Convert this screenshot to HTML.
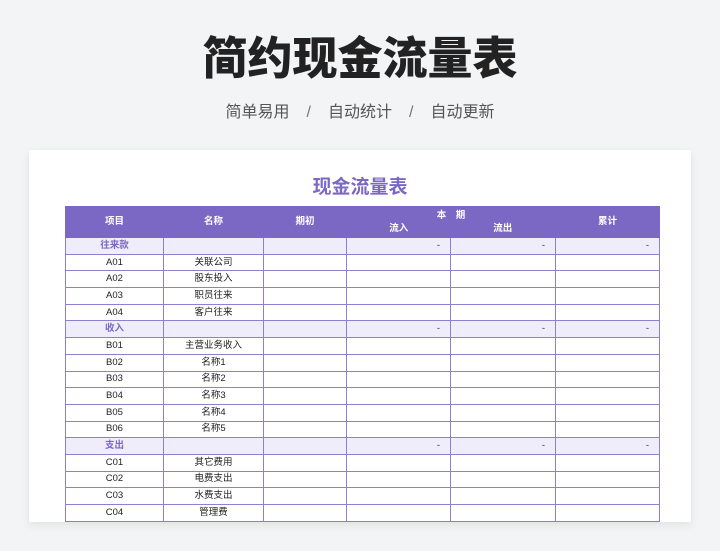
<!DOCTYPE html>
<html><head><meta charset="utf-8"><style>
*{margin:0;padding:0;box-sizing:border-box}
body{width:720px;height:551px;background:#f3f4f6;font-family:"Liberation Sans","Noto Sans CJK SC",sans-serif;position:relative;overflow:hidden}
.t{position:absolute;left:0;width:720px;text-align:center;top:30px;font-size:45px;font-weight:900;color:#222;line-height:58px;letter-spacing:0px}
.s{position:absolute;left:0;width:720px;text-align:center;top:102px;font-size:16px;color:#555;line-height:22px;word-spacing:0}
.s span{margin:0 17px;color:#777}
.card{position:absolute;left:29px;top:150px;width:662px;height:372px;background:#fff;box-shadow:0 3px 8px rgba(0,0,0,.08);overflow:hidden}
.ct{position:absolute;left:0;width:662px;top:22px;text-align:center;font-size:19px;font-weight:bold;color:#7b68c4}
table{position:absolute;left:36px;top:56px;border-collapse:collapse;table-layout:fixed;width:594px}
td{border:1px solid #8e80d0;height:16.7px;font-size:9.5px;text-align:center;color:#222;padding:0;line-height:14px}
tr.h td{background:#7b68c4;color:#fff;font-weight:bold;height:31px;border-color:#7b68c4}
tr.g td{background:#f0edfa;color:#7b68c4;font-weight:bold}
td.d{text-align:right;padding-right:10px;color:#888;font-weight:normal}
</style></head><body>
<div class="t">简约现金流量表</div>
<div class="s">简单易用<span>/</span>自动统计<span>/</span>自动更新</div>
<div class="card">
<div class="ct">现金流量表</div>
<table>
<colgroup><col style="width:98px"><col style="width:100px"><col style="width:83px"><col style="width:104px"><col style="width:105px"><col style="width:104px"></colgroup>
<tr class="h"><td>项目</td><td>名称</td><td>期初</td><td colspan="2" style="position:relative"><div style="position:absolute;left:0;right:0;top:2px">本　期</div><div style="display:flex;padding-top:14px"><span style="width:104px">流入</span><span style="width:105px">流出</span></div></td><td>累计</td></tr>
<tr class="g"><td>往来款</td><td></td><td></td><td class="d">-</td><td class="d">-</td><td class="d">-</td></tr>
<tr><td>A01</td><td>关联公司</td><td></td><td></td><td></td><td></td></tr>
<tr><td>A02</td><td>股东投入</td><td></td><td></td><td></td><td></td></tr>
<tr><td>A03</td><td>职员往来</td><td></td><td></td><td></td><td></td></tr>
<tr><td>A04</td><td>客户往来</td><td></td><td></td><td></td><td></td></tr>
<tr class="g"><td>收入</td><td></td><td></td><td class="d">-</td><td class="d">-</td><td class="d">-</td></tr>
<tr><td>B01</td><td>主营业务收入</td><td></td><td></td><td></td><td></td></tr>
<tr><td>B02</td><td>名称1</td><td></td><td></td><td></td><td></td></tr>
<tr><td>B03</td><td>名称2</td><td></td><td></td><td></td><td></td></tr>
<tr><td>B04</td><td>名称3</td><td></td><td></td><td></td><td></td></tr>
<tr><td>B05</td><td>名称4</td><td></td><td></td><td></td><td></td></tr>
<tr><td>B06</td><td>名称5</td><td></td><td></td><td></td><td></td></tr>
<tr class="g"><td>支出</td><td></td><td></td><td class="d">-</td><td class="d">-</td><td class="d">-</td></tr>
<tr><td>C01</td><td>其它费用</td><td></td><td></td><td></td><td></td></tr>
<tr><td>C02</td><td>电费支出</td><td></td><td></td><td></td><td></td></tr>
<tr><td>C03</td><td>水费支出</td><td></td><td></td><td></td><td></td></tr>
<tr><td>C04</td><td>管理费</td><td></td><td></td><td></td><td></td></tr>
<tr><td>C05</td><td>其他</td><td></td><td></td><td></td><td></td></tr>
</table>
</div>
</body></html>
